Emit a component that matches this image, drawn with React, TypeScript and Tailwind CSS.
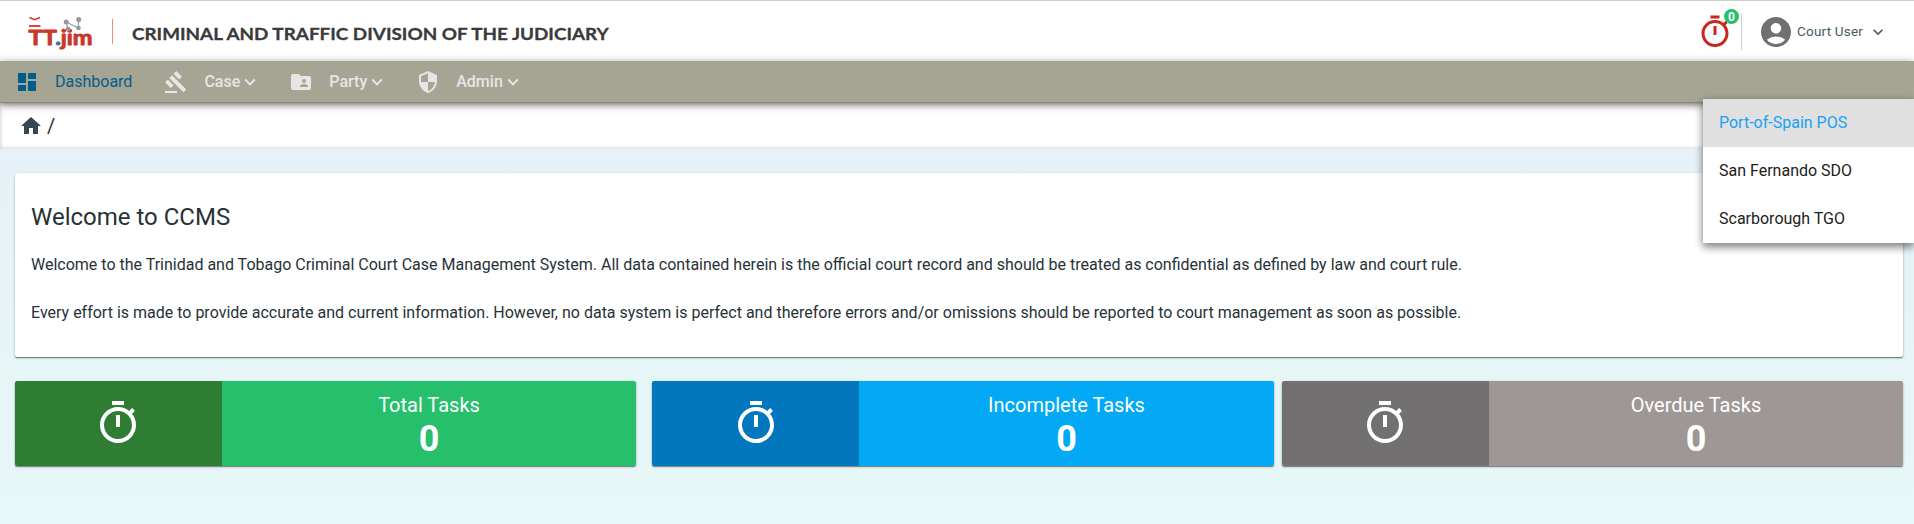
import { MdDashboard, MdGavel, MdSecurity, MdHome, MdAccountCircle, MdFolderShared, MdKeyboardArrowDown } from "react-icons/md";
import type { IconType } from "react-icons";

function Timer({ className }: { className: string }) {
  return (
    <svg viewBox="0 0 24 24" fill="currentColor" className={className}>
      <path d="M15 1H9v2h6V1zm-4 13h2V8h-2v6zm8.030-6.610 1.420-1.420c-.43-.51-.9-.99-1.410-1.410l-1.420 1.420C16.070 4.740 14.120 4 12 4c-4.970 0-9 4.030-9 9s4.020 9 9 9 9-4.030 9-9c0-2.120-.74-4.070-1.970-5.610zM12 20c-3.870 0-7-3.130-7-7s3.130-7 7-7 7 3.130 7 7-3.130 7-7 7z" />
    </svg>
  );
}

function Logo() {
  return (
    <svg width="80" height="46" viewBox="20 8 80 46" className="block shrink-0">
      <g fill="none" stroke="#c8372a">
        <path d="M29.500 17.500l5.200 2.200 5.200-2.200" strokeWidth="1.500" />
        <path d="M29 26h11.500" strokeWidth="1.800" />
      </g>
      <text x="28.500" y="44.500" fontFamily="Lato" fontWeight="700" fontSize="20.500" fill="#c8372a" stroke="#c8372a" strokeWidth="0.900" strokeLinejoin="round" textLength="64" lengthAdjust="spacingAndGlyphs">
        TT<tspan fill="#1b75bb" stroke="#1b75bb">.</tspan>jim
      </text>
      <g stroke="#97979b" strokeWidth="1.200" fill="#97979b">
        <path d="M68 29l-1.800-7L78.500 28V19.500" fill="none" />
        <circle cx="66.200" cy="22" r="1.900" />
        <circle cx="78.700" cy="19.500" r="1.900" />
        <circle cx="78.500" cy="28" r="1.700" />
        <circle cx="68" cy="29" r="1.700" />
      </g>
    </svg>
  );
}

function NavItem({ icon: Icon, label }: { icon: IconType; label: string }) {
  return (
    <a className="flex h-full items-center text-[#e6e6e6]">
      <Icon className="mr-4 size-6" />
      <span className="font-medium">{label}</span>
      <MdKeyboardArrowDown className="-ml-px size-[22px]" />
    </a>
  );
}

function Tile({ label, width, left, right }: { label: string; width: string; left: string; right: string }) {
  return (
    <div className={`flex h-[85px] overflow-hidden rounded-[2px] text-white shadow-[0_1px_1px_rgba(0,0,0,0.4),0_1px_3px_rgba(0,0,0,0.2)] ${width}`}>
      <div className={`flex w-[207px] items-center justify-center pb-px ${left}`}>
        <Timer className="size-12" />
      </div>
      <div className={`flex flex-1 flex-col items-center pt-3 ${right}`}>
        <span className="text-[20px] leading-6">{label}</span>
        <span className="mt-1 text-[36px] leading-[36px] font-bold">0</span>
      </div>
    </div>
  );
}

export default function App() {
  return (
    <div className="relative flex h-[524px] w-[1914px] flex-col overflow-hidden bg-linear-to-b from-[#e6f1f8] from-30% via-[#e6f5f6] via-70% to-[#e7f8f8] font-[Roboto,sans-serif] text-base text-[#263238]">
      <header className="flex h-[61px] shrink-0 items-center border-t border-[#d0d0d0] bg-white pl-5">
        <Logo />
        <div className="ml-3 h-[25px] w-px bg-[#ef8d7d]" />
        <h1 className="ml-[19px] origin-left scale-x-[1.109] pt-[5px] font-[Lato,sans-serif] text-[17px] leading-5 font-bold whitespace-nowrap text-[#3a3a3a] [-webkit-text-stroke:0.3px_#3a3a3a]">CRIMINAL AND TRAFFIC DIVISION OF THE JUDICIARY</h1>
        <div className="ml-auto flex items-center pt-0.5 pr-[26px]">
          <div className="relative mr-2 text-[#c5281c]">
            <Timer className="size-9" />
            <span className="absolute -top-[5px] -right-[6px] flex size-[15px] items-center justify-center rounded-full bg-[#26c06c] text-[12px] font-bold text-white">0</span>
          </div>
          <div className="h-9 w-px bg-[#ccc]" />
          <MdAccountCircle className="ml-4 size-9 text-[#707070]" />
          <span className="-mt-px ml-[3px] w-[71px] text-[13.500px] tracking-[0.200px] text-[#455a64]">Court User</span>
          <MdKeyboardArrowDown className="size-5 text-[#555]" />
        </div>
      </header>
      <nav className="z-10 flex h-[42px] shrink-0 items-center gap-7 border-b border-[#8d8a6c] bg-[#a6a594] shadow-[0_2px_8px_rgba(0,0,0,0.5)]">
        <a className="mr-1 ml-[15px] flex items-center text-[#015e8c]">
          <MdDashboard className="mr-4 size-6" />
          <span>Dashboard</span>
        </a>
        <NavItem icon={MdGavel} label="Case" />
        <NavItem icon={MdFolderShared} label="Party" />
        <NavItem icon={MdSecurity} label="Admin" />
      </nav>
      <div className="flex h-[46px] shrink-0 items-center bg-white pl-[19px] shadow-[inset_0_0_4px_rgba(0,0,0,0.25)]">
        <MdHome className="size-6 text-[#37474f]" />
        <span className="ml-1 text-[20px]">/</span>
      </div>
      <main className="pt-6 pr-[11px] pl-[15px]">
        <section className="h-[184px] rounded-[2px] bg-white px-4 pt-8 shadow-[0_1px_1px_rgba(0,0,0,0.45),0_1px_3px_rgba(0,0,0,0.2)]">
          <h2 className="text-[24px] leading-6">Welcome to CCMS</h2>
          <p className="mt-6 leading-6">Welcome to the Trinidad and Tobago Criminal Court Case Management System. All data contained herein is the official court record and should be treated as confidential as defined by law and court rule.</p>
          <p className="mt-6 leading-6">Every effort is made to provide accurate and current information. However, no data system is perfect and therefore errors and/or omissions should be reported to court management as soon as possible.</p>
        </section>
        <section className="mt-6 flex">
          <Tile label="Total Tasks" width="w-[621px]" left="bg-[#2e7d32] pr-px" right="bg-[#26c06c]" />
          <div className="w-4" />
          <Tile label="Incomplete Tasks" width="w-[622px]" left="bg-[#0277bd] pl-px" right="bg-[#03a9f4]" />
          <div className="w-2" />
          <Tile label="Overdue Tasks" width="w-[621px]" left="bg-[#727070] pr-px" right="bg-[#9e9796]" />
        </section>
      </main>
      <ul className="absolute top-[99px] right-0 z-20 w-[211px] bg-white text-[#212121] shadow-[0_5px_8px_rgba(0,0,0,0.3),0_2px_8px_rgba(0,0,0,0.3)]">
        <li className="flex h-12 items-center bg-[#e0e0e0] px-4 text-[#18a0f5]">Port-of-Spain POS</li>
        <li className="flex h-12 items-center px-4">San Fernando SDO</li>
        <li className="flex h-12 items-center px-4">Scarborough TGO</li>
      </ul>
    </div>
  );
}
